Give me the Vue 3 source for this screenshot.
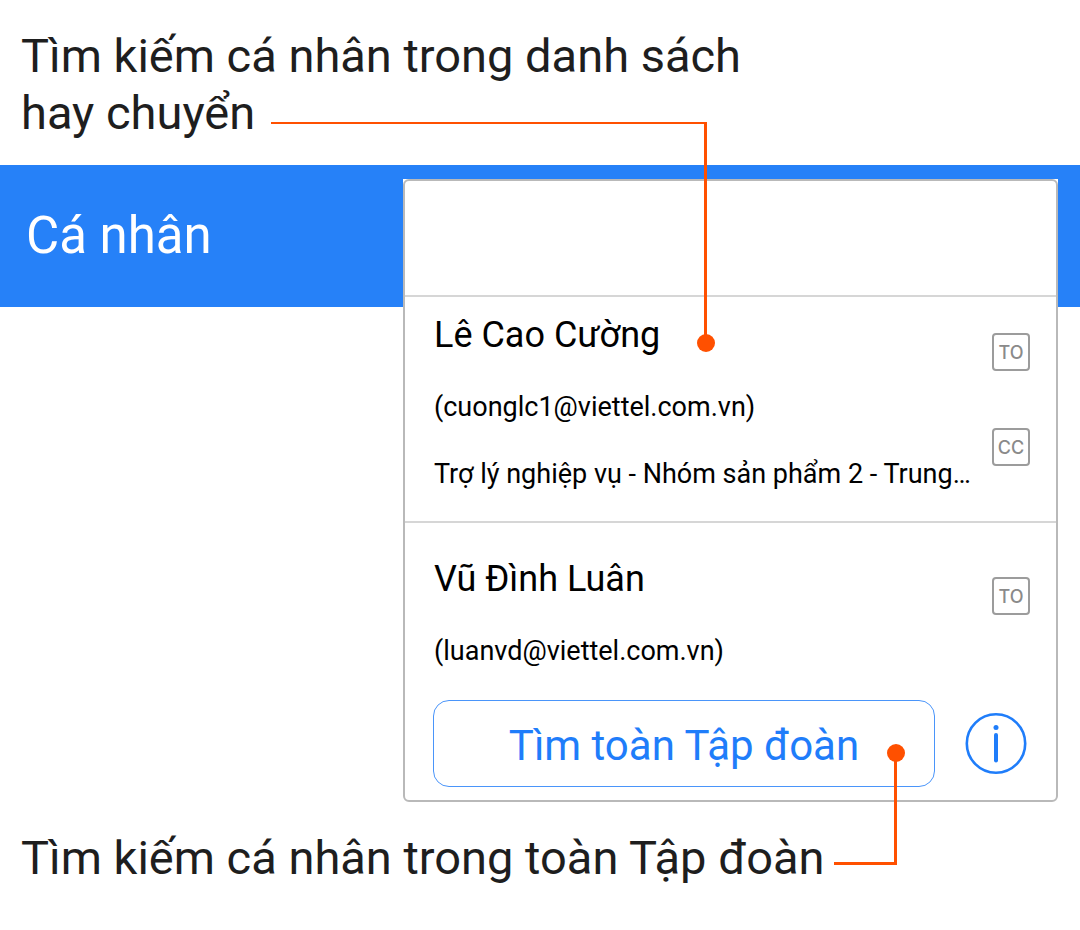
<script setup>
import { ref } from 'vue'

const query = ref('')

const people = [
  {
    name: 'Lê Cao Cường',
    email: '(cuonglc1@viettel.com.vn)',
    role: 'Trợ lý nghiệp vụ - Nhóm sản phẩm 2 - Trung…',
    actions: ['TO', 'CC'],
  },
  {
    name: 'Vũ Đình Luân',
    email: '(luanvd@viettel.com.vn)',
    role: '',
    actions: ['TO'],
  },
]
</script>

<template>
  <main class="page">
    <p class="caption">Tìm kiếm cá nhân trong danh sách<br />hay chuyển</p>

    <section class="stage">
      <div class="banner">
        <label class="banner-title" for="person-search">Cá nhân</label>
      </div>

      <div class="panel">
        <div class="card">
          <input id="person-search" v-model="query" class="search" type="text" autocomplete="off" />

          <ul class="people">
            <li v-for="person in people" :key="person.email" class="person">
              <div class="details">
                <h2 class="name">{{ person.name }}</h2>
                <p class="line">{{ person.email }}</p>
                <p v-if="person.role" class="line">{{ person.role }}</p>
              </div>
              <div class="actions">
                <button v-for="action in person.actions" :key="action" type="button" class="tag">{{ action }}</button>
              </div>
            </li>
          </ul>

          <div class="footer">
            <button type="button" class="search-all">Tìm toàn Tập đoàn</button>
            <button type="button" class="info" aria-label="Thông tin">
              <svg viewBox="0 0 61 61" width="61" height="61" fill="none" stroke="#1f7dfa" aria-hidden="true">
                <circle cx="30" cy="30.500" r="29.2" stroke-width="2.6" />
                <circle cx="30" cy="14.500" r="2.500" fill="#1f7dfa" stroke="none" />
                <path d="M30 22V47.500" stroke-width="4" stroke-linecap="round" />
              </svg>
            </button>
          </div>
        </div>

        <span class="connector connector-list"></span>
        <span class="connector connector-all"></span>
      </div>
    </section>

    <p class="caption">Tìm kiếm cá nhân trong toàn Tập đoàn</p>
  </main>
</template>

<style>
html,
body {
  background: #ffffff;
}
</style>

<style scoped>
.page {
  font-family: Roboto, 'Noto Sans', sans-serif;
  color: #000000;
}

.caption {
  margin: 0;
  padding: 27px 21px 24px;
  font-size: 47px;
  line-height: 57px;
  color: #1e1e1e;
}

.stage {
  display: grid;
  grid-template-columns: 403px minmax(0, 1fr) 22px;
  grid-template-rows: 14px 128px auto;
}

.banner {
  grid-column: 1 / -1;
  grid-row: 1 / 3;
  display: flex;
  align-items: center;
  padding-left: 26px;
  background: #2681f8;
}

.banner-title {
  font-size: 51px;
  line-height: 60px;
  color: #ffffff;
}

.panel {
  grid-column: 2;
  grid-row: 2 / 4;
  position: relative;
  background: #ffffff;
}

.card {
  border: 2px solid #b9b9b9;
  border-radius: 6px;
}

.search {
  display: block;
  box-sizing: border-box;
  width: 100%;
  height: 116px;
  padding: 0 29px;
  border: 0;
  border-bottom: 2px solid #d6d6d6;
  background: transparent;
  font: inherit;
  font-size: 36px;
  outline: none;
}

.people {
  margin: 0;
  padding: 0;
  list-style: none;
}

.person {
  display: flex;
  justify-content: space-between;
  gap: 16px;
  padding: 17px 26px 31px 29px;
}

.person + .person {
  padding: 35px 26px 33px 29px;
  border-top: 2px solid #d6d6d6;
}

.details {
  display: flex;
  flex-direction: column;
  gap: 35px;
  min-width: 0;
}

.name {
  margin: 0;
  font-size: 36px;
  font-weight: 400;
  line-height: 42px;
}

.line {
  margin: 0;
  font-size: 27px;
  line-height: 32px;
  white-space: nowrap;
}

.actions {
  display: flex;
  flex: none;
  flex-direction: column;
  gap: 57px;
  padding-top: 19px;
}

.tag {
  width: 38px;
  height: 38px;
  padding: 2px 0 0;
  border: 2px solid #9c9c9c;
  border-radius: 4px;
  background: transparent;
  font-family: Inter, 'Liberation Sans', sans-serif;
  font-size: 18px;
  font-weight: 500;
  line-height: 32px;
  color: #8a8a8a;
}

.footer {
  display: flex;
  align-items: center;
  gap: 31px;
  padding: 0 29px 13px 28px;
}

.search-all {
  flex: 1;
  height: 87px;
  padding: 4px 0 0;
  border: 1px solid #4a95fa;
  border-radius: 16px;
  background: transparent;
  font: inherit;
  font-size: 42px;
  line-height: 50px;
  color: #1f7dfa;
}

.info {
  width: 61px;
  height: 61px;
  padding: 0;
  border: 0;
  background: transparent;
}

.info svg {
  display: block;
  overflow: visible;
}

.connector {
  position: absolute;
  box-sizing: border-box;
  border: 0 solid #ff5000;
  pointer-events: none;
}

.connector::after {
  content: '';
  position: absolute;
  right: -11px;
  width: 18px;
  height: 18px;
  border-radius: 50%;
  background: #ff5000;
}

.connector-list {
  top: -57px;
  left: -132px;
  width: 436px;
  height: 221px;
  border-top-width: 2px;
  border-right-width: 3px;
}

.connector-list::after {
  bottom: -9px;
}

.connector-all {
  right: 161px;
  bottom: -63px;
  width: 63px;
  height: 112px;
  border-right-width: 3px;
  border-bottom-width: 3px;
}

.connector-all::after {
  top: -9px;
}
</style>
